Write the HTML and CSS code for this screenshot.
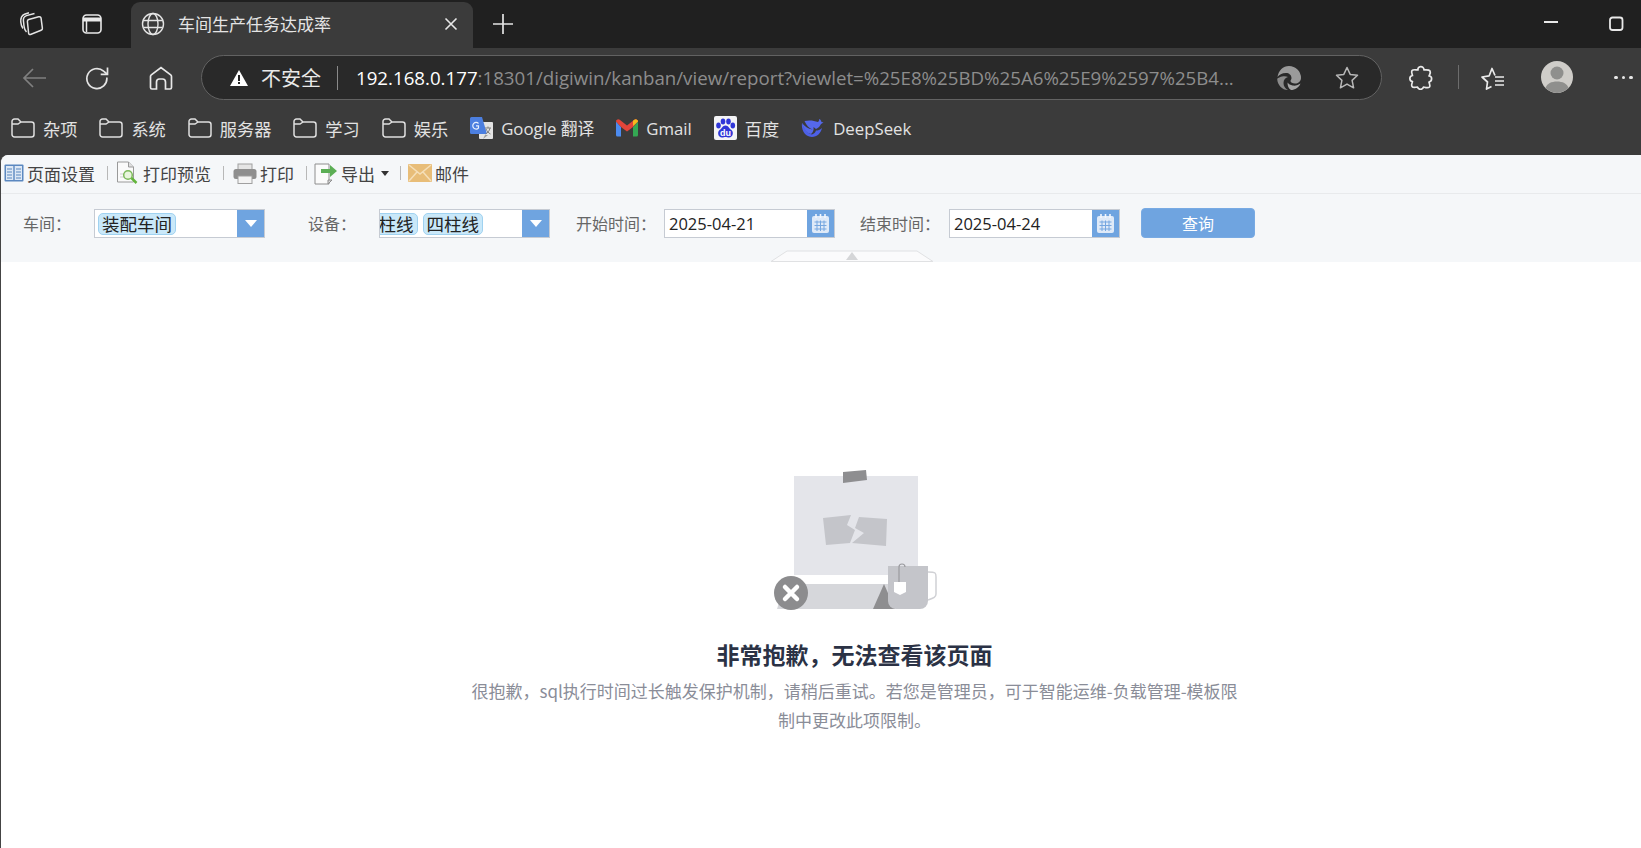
FILE: index.html
```html
<!DOCTYPE html>
<html lang="zh-CN">
<head>
<meta charset="utf-8">
<title>车间生产任务达成率</title>
<link rel="stylesheet" href="styles.css">
</head>
<body>
<div class="tabstrip">
  <div class="cell"><svg width="26" height="26" viewBox="0 0 26 26" fill="none" stroke="#e4e4e4" stroke-width="1.500"><path d="M11.500 23.500c-1 .3-1.800-.3-1.900-1.300L8.400 10.500c-.1-1 .4-1.700 1.300-2l10-2.700c1.200-.3 2.200.3 2.400 1.500l1.300 10c.1 1-.4 1.700-1.300 2z"/><path d="M7.500 21C5.800 19.500 5.300 17.500 5 15L4.400 9.500C4.100 6.800 5 5.500 7.500 4.600L15.500 2.500"/><path d="M4 17.500C2.500 15.500 2 13.500 1.800 11 1.500 7 2.500 4.500 5.500 3.200L10 1.800"/></svg></div>
  <div class="cell"><svg width="22" height="22" viewBox="0 0 22 22" fill="none" stroke="#e8e8e8" stroke-width="1.600"><rect x="2" y="2" width="18" height="18" rx="3.500"/><path d="M2 6.500h18" stroke-width="4"/><path d="M5.500 7v12" stroke-width="1.500"/></svg></div>
  <div class="tab">
    <svg width="24" height="24" viewBox="0 0 24 24" fill="none" stroke="#e4e4e4" stroke-width="1.400"><circle cx="12" cy="12" r="10.500"/><ellipse cx="12" cy="12" rx="5" ry="10.500"/><path d="M2.500 8.500h19M2.500 15.500h19"/></svg>
    <span class="tab-title">车间生产任务达成率</span>
    <svg class="tab-close" width="14" height="14" viewBox="0 0 14 14" stroke="#e8e8e8" stroke-width="1.600"><path d="M1.500 1.500l11 11M12.500 1.500l-11 11"/></svg>
  </div>
  <div class="cell new"><svg width="22" height="22" viewBox="0 0 22 22" stroke="#e4e4e4" stroke-width="1.700"><path d="M11 1v20M1 11h20"/></svg></div>
  <div class="winctl">
    <div class="wbtn"><svg width="16" height="16" viewBox="0 0 16 16" stroke="#e8e8e8" stroke-width="2"><path d="M1 6h14"/></svg></div>
    <div class="wbtn"><svg width="16" height="16" viewBox="0 0 16 16" fill="none" stroke="#e8e8e8" stroke-width="1.800"><rect x="2" y="1.500" width="12.500" height="12.500" rx="2.500"/></svg></div>
  </div>
</div>

<div class="navbar">
  <div class="nav"><svg width="26" height="24" viewBox="0 0 26 24" fill="none" stroke="#808080" stroke-width="1.700"><path d="M24 12H2M11 3l-9 9 9 9"/></svg></div>
  <div class="nav"><svg width="26" height="26" viewBox="0 0 26 26" fill="none" stroke="#e4e4e4" stroke-width="1.700"><path d="M21.800 12.500a10 10 0 1 1-3.200-6.300L22 9"/><path d="M22.500 2.500V9.300h-6.800"/></svg></div>
  <div class="nav"><svg width="24" height="26" viewBox="0 0 24 26" fill="none" stroke="#e8e8e8" stroke-width="1.700"><path d="M3 24a1.500 1.500 0 0 1-1.500-1.500V11.500a2 2 0 0 1 .8-1.600L12 2.500l9.700 7.400a2 2 0 0 1 .8 1.600v11A1.500 1.500 0 0 1 21 24h-4.500v-7a3 3 0 0 0-3-3h-3a3 3 0 0 0-3 3v7z"/></svg></div>
  <div class="omnibox">
    <svg class="warn" width="18" height="16" viewBox="0 0 18 16"><path d="M9 0l9 16H0z" fill="#fff"/><path d="M8 5h2v6H8zM8 12h2v2H8z" fill="#222"/></svg>
    <span class="insecure">不安全</span>
    <span class="divider"></span>
    <span class="url"><span class="host">192.168.0.177</span>:18301/digiwin/kanban/view/report?viewlet=%25E8%25BD%25A6%25E9%2597%25B4...</span>
    <svg class="edge" width="24" height="24" viewBox="0 0 24 24"><path d="M12 0a12 12 0 0 1 12 12c0 3.500-3 5.500-6 5.500-2.500 0-4.500-1-4.500-2.500 0-1 1-1.200 1-3 0-3-2.500-5-5.500-5C5 7 2 9 .5 11 1.500 4.500 6 0 12 0z" fill="#9a9a9a"/><path d="M.2 13C.5 19 5 24 11 24c-3-1.500-4.500-4-4.500-7 0-3.500 2-5.500 4.500-6-4-2-10 .5-10.800 2z" fill="#8a8a8a"/><path d="M14 24c4 0 8-2.500 9.500-6.500-2 1.500-5 2.500-8 2-2-.3-4-1.500-5-3 0 3.500 1 6 3.500 7.500z" fill="#a5a5a5"/></svg>
    <svg class="star" width="24" height="24" viewBox="0 0 24 24" fill="none" stroke="#b8b8b8" stroke-width="1.500" stroke-linejoin="round"><path d="M12 1.500l3.200 6.900 7.300.9-5.400 5.100 1.500 7.400-6.600-3.700-6.600 3.700 1.500-7.400L1.500 9.300l7.300-.9z"/></svg>
  </div>
  <div class="act puzzle"><svg width="24" height="26" viewBox="0 0 24 26" fill="none" stroke="#eaeaea" stroke-width="1.700" stroke-linejoin="round"><path d="M9 5c-1-4 6-5 6 0 2 0 5-.5 6 1 1 2-.5 3.500-1 5 3.500 0 3.500 5.500 0 6 .5 2 1.500 3.500.5 5-1.500 1.500-4 .5-6 0-1 3-5 3-6 0-2 .5-4.500 1-5.500-.5-1-1.500 0-3.500.5-5C0 16 0 11 3.500 10.500 3 9 2 7 3 5.500 4.500 4 7 5 9 5z"/></svg></div>
  <span class="vsep"></span>
  <div class="act fav"><svg width="26" height="24" viewBox="0 0 26 24" fill="none" stroke="#eaeaea" stroke-width="1.700" stroke-linejoin="round"><path d="M11.500 20.500l-5 2.500 1-7L2 11l7.200-1.200L12 2.500l3 7"/><path d="M15 11h9M15 15h9M15 19h9"/></svg></div>
  <div class="avatar"><svg width="32" height="32" viewBox="0 0 32 32"><circle cx="16" cy="16" r="16" fill="#cfcdc9"/><circle cx="16" cy="12" r="6.500" fill="#8f8f8d"/><path d="M4.500 27c1.500-4.500 6-6.500 11.500-6.500s10 2 11.500 6.500a16 16 0 0 1-23 0z" fill="#8f8f8d"/></svg></div>
  <div class="dots"><i></i><i></i><i></i></div>
</div>

<div class="bookmarks">
  <div class="bm"><svg class="folder" width="24" height="20" viewBox="0 0 24 20" fill="none" stroke="#e0e0e0" stroke-width="1.500"><path d="M1 3.500A2.500 2.500 0 0 1 3.500 1H7l3 3h10.500A2.500 2.500 0 0 1 23 6.500v10a2.500 2.500 0 0 1-2.500 2.500h-17A2.500 2.500 0 0 1 1 16.500z"/><path d="M1 6h6l3-2"/></svg><span>杂项</span></div>
  <div class="bm"><svg class="folder" width="24" height="20" viewBox="0 0 24 20" fill="none" stroke="#e0e0e0" stroke-width="1.500"><path d="M1 3.500A2.500 2.500 0 0 1 3.500 1H7l3 3h10.500A2.500 2.500 0 0 1 23 6.500v10a2.500 2.500 0 0 1-2.500 2.500h-17A2.500 2.500 0 0 1 1 16.500z"/><path d="M1 6h6l3-2"/></svg><span>系统</span></div>
  <div class="bm"><svg class="folder" width="24" height="20" viewBox="0 0 24 20" fill="none" stroke="#e0e0e0" stroke-width="1.500"><path d="M1 3.500A2.500 2.500 0 0 1 3.500 1H7l3 3h10.500A2.500 2.500 0 0 1 23 6.500v10a2.500 2.500 0 0 1-2.500 2.500h-17A2.500 2.500 0 0 1 1 16.500z"/><path d="M1 6h6l3-2"/></svg><span>服务器</span></div>
  <div class="bm"><svg class="folder" width="24" height="20" viewBox="0 0 24 20" fill="none" stroke="#e0e0e0" stroke-width="1.500"><path d="M1 3.500A2.500 2.500 0 0 1 3.500 1H7l3 3h10.500A2.500 2.500 0 0 1 23 6.500v10a2.500 2.500 0 0 1-2.500 2.500h-17A2.500 2.500 0 0 1 1 16.500z"/><path d="M1 6h6l3-2"/></svg><span>学习</span></div>
  <div class="bm"><svg class="folder" width="24" height="20" viewBox="0 0 24 20" fill="none" stroke="#e0e0e0" stroke-width="1.500"><path d="M1 3.500A2.500 2.500 0 0 1 3.500 1H7l3 3h10.500A2.500 2.500 0 0 1 23 6.500v10a2.500 2.500 0 0 1-2.500 2.500h-17A2.500 2.500 0 0 1 1 16.500z"/><path d="M1 6h6l3-2"/></svg><span>娱乐</span></div>
  <div class="bm"><svg width="23" height="24" viewBox="0 0 23 24"><rect x="9" y="6" width="14" height="17" rx="1" fill="#e4e4e4"/><path d="M15 19l-2 4 5-4z" fill="#9e9e9e"/><path d="M1.500 1H12l5 17H1.500A1.500 1.500 0 0 1 0 16.500v-14A1.500 1.500 0 0 1 1.500 1z" fill="#4c7fe0"/><path d="M11 7.500A3.300 3.300 0 1 0 11 12V9.800H8.500" fill="none" stroke="#e8f0ff" stroke-width="1.200" transform="translate(-2.500 0)"/><path d="M15 12h6M18 10.500v1.500M20 12c-.5 3-2.500 5-4.500 6M16 13c.8 2 2.500 4 4.500 5" fill="none" stroke="#808080" stroke-width="1"/></svg><span class="latin">Google 翻译</span></div>
  <div class="bm"><svg width="22" height="18" viewBox="0 0 22 18"><path d="M0 2.500V16a1.500 1.500 0 0 0 1.500 1.500H5V8z" fill="#4c8bf0"/><path d="M17 8v9.500h3.500A1.500 1.500 0 0 0 22 16V2.500z" fill="#34a853"/><path d="M0 2.500C0 .5 2.200-.5 3.700.700L11 6.500l7.300-5.800C19.800-.5 22 .5 22 2.500L17 8l-6 4.500L5 8z" fill="#e3453a"/><path d="M17 1.700l1.300-1C19.800-.5 22 .5 22 2.500L17 7z" fill="#f6bb1c"/></svg><span class="latin">Gmail</span></div>
  <div class="bm"><svg width="23" height="24" viewBox="0 0 23 24"><rect width="23" height="24" rx="2" fill="#f4f4f6"/><g fill="#2f36d8"><ellipse cx="4.500" cy="9.500" rx="2.300" ry="3"/><ellipse cx="9" cy="5.500" rx="2.300" ry="3"/><ellipse cx="14.500" cy="5.500" rx="2.300" ry="3"/><ellipse cx="18.800" cy="9.500" rx="2.300" ry="3"/><path d="M11.500 9.500c3 0 3.500 3 6 4.500 2.500 2 1.500 7.500-2.500 7.500-1.500 0-2.300-.5-3.500-.5s-2 .5-3.500.5c-4 0-5-5.500-2.500-7.500 2.500-1.500 3-4.500 6-4.500z"/></g><text x="11.500" y="20" class="du">du</text></svg><span>百度</span></div>
  <div class="bm"><svg width="24" height="20" viewBox="0 0 24 20"><path d="M1 5c1.500 6 4 10 9 11 2-1.500 3-4 2.500-7l2.500 2c2.500-1 4-3 5-5l2.500-1.500-2-.5C20 2 19 1 18 1c.5 1 0 2-1 3C13 2.500 8 2 3.500 3c2 4 4.500 7.500 8 8.500C7 11 3.500 8 1 5z" fill="#5568ea"/><path d="M1 5c-1 5 2 14 10 14 5 0 9-4 10-9-2 2-4 2.500-6 2.500-.5 2-2 3-4 4-5-1-8-6-10-11.500z" fill="#4d60e6"/></svg><span class="latin">DeepSeek</span></div>
</div>

<div class="page">
  <div class="rtoolbar">
    <div class="ritem"><svg width="20" height="18" viewBox="0 0 20 18"><rect x=".5" y=".5" width="19" height="17" rx="1" fill="#5b88c0"/><rect x="2" y="2" width="7.300" height="14" fill="#dde8f5"/><rect x="10.700" y="2" width="7.300" height="14" fill="#dde8f5"/><path d="M3 5h5M3 8h5M3 11h5M3 14h5M12 5h5M12 8h5M12 11h5M12 14h5" stroke="#5b88c0" stroke-width="1.200"/></svg><span>页面设置</span></div>
    <span class="rsep s1"></span>
    <div class="ritem"><svg width="24" height="24" viewBox="0 0 24 24"><path d="M1.500 1h11l5 5v15h-16z" fill="#fafafa" stroke="#9a9a9a"/><path d="M12.500 1v5h5" fill="#e0e0e0" stroke="#9a9a9a"/><path d="M4 13h6M4 16h5" stroke="#cfcfcf"/><circle cx="12" cy="14" r="4.300" fill="#e8f5dc" stroke="#7cb95a" stroke-width="1.500"/><path d="M15.500 17l5 5" stroke="#63b53c" stroke-width="2.500"/></svg><span>打印预览</span></div>
    <span class="rsep s2"></span>
    <div class="ritem"><svg width="24" height="21" viewBox="0 0 24 21"><rect x="5" y="1" width="14" height="6" fill="#e5e5e5" stroke="#a0a0a0"/><rect x=".5" y="6" width="23" height="10" rx="2.500" fill="#8f8f8f"/><rect x="5" y="13" width="14" height="7.500" fill="#f4f4f4" stroke="#a0a0a0"/></svg><span>打印</span></div>
    <span class="rsep s3"></span>
    <div class="ritem"><svg width="24" height="24" viewBox="0 0 24 24"><path d="M1 3h14v20H1z" fill="#fbfbfb" stroke="#8e8e8e" stroke-width="1"/><path d="M14 23l4-4h-4z" fill="#d8d8d8" stroke="#8e8e8e"/><path d="M7 8h9V4l7 6-7 6v-4H7z" fill="#5cae55"/></svg><span>导出</span><i class="caret"></i></div>
    <span class="rsep s4"></span>
    <div class="ritem"><svg width="24" height="18" viewBox="0 0 24 18"><rect width="24" height="18" rx="1" fill="#e8bd78"/><path d="M1 1l11 9 11-9M1 17l8-9M23 17l-8-9" fill="none" stroke="#f5dfb8" stroke-width="1.500"/></svg><span>邮件</span></div>
  </div>

  <div class="filters">
    <label class="flabel l1">车间：</label>
    <div class="combo c1"><div class="field"><span class="tag">装配车间</span></div><div class="arrow"><i></i></div></div>
    <label class="flabel l2">设备：</label>
    <div class="combo c2"><div class="field end"><span class="tag">三柱线</span><span class="tag">四柱线</span></div><div class="arrow"><i></i></div></div>
    <label class="flabel l3">开始时间：</label>
    <div class="combo c3"><div class="field date">2025-04-21</div><div class="cal"><svg width="19" height="21" viewBox="0 0 19 21"><rect x="1" y="3" width="17" height="17" rx="2" fill="#dfeaf8"/><path d="M5 1v4M9.500 1v4M14 1v4" stroke="#f3f7fd" stroke-width="1.600"/><path d="M3.500 9h12M3.500 12.500h12M3.500 16h12M6 7.500v10.500M9.500 7.500v10.500M13 7.500v10.500" stroke="#76a7e0" stroke-width="1"/></svg></div></div>
    <label class="flabel l4">结束时间：</label>
    <div class="combo c3"><div class="field date">2025-04-24</div><div class="cal"><svg width="19" height="21" viewBox="0 0 19 21"><rect x="1" y="3" width="17" height="17" rx="2" fill="#dfeaf8"/><path d="M5 1v4M9.500 1v4M14 1v4" stroke="#f3f7fd" stroke-width="1.600"/><path d="M3.500 9h12M3.500 12.500h12M3.500 16h12M6 7.500v10.500M9.500 7.500v10.500M13 7.500v10.500" stroke="#76a7e0" stroke-width="1"/></svg></div></div>
    <button class="query">查询</button>
    <svg class="collapse" width="164" height="12" viewBox="0 0 164 12"><path d="M1 11.500 17 1h130l16 10.500z" fill="#fbfbfc" stroke="#e0e1e3"/><path d="M82 2l6 8H76z" fill="#d5d6d8"/></svg>
  </div>

  <div class="notice">
    <svg class="art" width="164" height="140" viewBox="0 0 164 140">
      <rect x="21" y="6" width="124" height="99" fill="#e4e5ea"/>
      <path d="M70 2 93 0l1 10-24 3z" fill="#8e8e90"/>
      <path d="M50 48l28-3-4 10 8 5-5 13-24 2z" fill="#c4c5ca"/>
      <path d="M86 47l28 2-1 27-34-3 12-10-9-5z" fill="#c4c5ca"/>
      <path d="M4 139 12 114h108v25z" fill="#d6d7db"/>
      <circle cx="18" cy="123" r="17" fill="#8c8c8e"/>
      <path d="M12 117l12 12M24 117l-12 12" stroke="#fff" stroke-width="4.500" stroke-linecap="round"/>
      <path d="M111 114l11 25h-22z" fill="#8e8e90"/>
      <path d="M155 102c8 0 8 1 8 5v17c0 3-2 4-8 6" fill="none" stroke="#d0d1d5" stroke-width="1.500"/>
      <path d="M115 96h40v35a8 8 0 0 1-8 8h-24a8 8 0 0 1-8-8z" fill="#c4c5ca"/>
      <path d="M126 112v-15a3 3 0 0 1 6 0" fill="none" stroke="#9a9a9e" stroke-width="1.200"/>
      <path d="M121 112h12v10l-6 3-6-3z" fill="#fff"/>
    </svg>
    <h1 class="n-title">非常抱歉，无法查看该页面</h1>
    <p class="n-text">很抱歉，sql执行时间过长触发保护机制，请稍后重试。若您是管理员，可于智能运维-负载管理-模板限制中更改此项限制。</p>
  </div>
</div>
</body>
</html>
```
FILE: styles.css
```css
* { box-sizing: border-box; }
html, body { margin: 0; height: 100%; }
body {
  width: 1641px;
  height: 848px;
  overflow: hidden;
  display: flex;
  flex-direction: column;
  background: #3b3b3b;
  font-family: "Open Sans", "Noto Sans CJK SC", sans-serif;
}
svg { display: block; flex: none; }

.tabstrip {
  height: 48px;
  flex: none;
  display: flex;
  align-items: flex-end;
  padding-left: 2px;
  background: #202020;
}
.cell {
  width: 60px;
  height: 48px;
  display: flex;
  align-items: center;
  justify-content: center;
}
.tab {
  width: 342px;
  height: 46px;
  margin-left: 9px;
  padding: 0 15px 3px 10px;
  display: flex;
  align-items: center;
  background: #3b3b3b;
  border-radius: 9px 9px 0 0;
  color: #e4e4e4;
  font-size: 17px;
}
.tab-title { margin-left: 13px; flex: 1; font-family: "Noto Sans CJK SC", sans-serif; }
.winctl { margin-left: auto; height: 48px; display: flex; gap: 15px; }
.wbtn {
  width: 50px;
  display: flex;
  align-items: center;
  justify-content: center;
}

.navbar {
  height: 52px;
  flex: none;
  padding: 7px 0 0 3px;
  display: flex;
  align-items: flex-start;
  background: #3b3b3b;
}
.nav {
  flex: none;
  width: 63px;
  height: 45px;
  display: flex;
  align-items: center;
  justify-content: center;
}
.omnibox {
  flex: none;
  width: 1181px;
  height: 45px;
  margin-left: 9px;
  padding: 0 23px 0 28px;
  display: flex;
  align-items: center;
  background: #292929;
  border: 1.500px solid #626262;
  border-radius: 23px;
}
.warn { margin-right: 13px; }
.insecure {
  flex: none;
  color: #e8e8e8;
  font-size: 20px;
  white-space: nowrap;
  font-family: "Noto Sans CJK SC", sans-serif;
}
.divider { flex: none; width: 1px; height: 24px; margin: 0 18px 0 16px; background: #8a8a8a; }
.url { flex: none; color: #8d8d8d; font-size: 18.700px; width: 889px; white-space: nowrap; overflow: hidden; }
.host { color: #fff; }
.edge { margin-left: 32px; }
.star { margin-left: 34px; }
.act {
  flex: none;
  height: 45px;
  display: flex;
  align-items: center;
}
.puzzle { margin-left: 27px; }
.vsep { flex: none; width: 1px; height: 24px; margin: 10px 0 0 25px; background: #6d6d6d; }
.fav { margin-left: 21px; }
.avatar { flex: none; margin-left: 35px; margin-top: 6px; }
.dots { flex: none; margin-left: 41px; height: 45px; display: flex; align-items: center; gap: 4px; }
.dots i { width: 3.500px; height: 3.500px; border-radius: 50%; background: #e8e8e8; }

.bookmarks {
  height: 55px;
  flex: none;
  padding: 1px 0 0 11px;
  display: flex;
  align-items: center;
  gap: 22px;
  background: #3b3b3b;
  color: #e2e2e2;
  font-size: 17.200px;
}
.bm { display: flex; align-items: center; gap: 8px; white-space: nowrap; }
.latin { font-size: 16.800px; }
.du { font: 700 9px "Liberation Sans", sans-serif; fill: #fff; text-anchor: middle; }

.page {
  flex: 1;
  display: flex;
  flex-direction: column;
  background: #fff;
  border-left: 1px solid #444;
  border-radius: 8px 0 0 0;
  overflow: hidden;
  font-family: "Noto Sans CJK SC", sans-serif;
}
.rtoolbar {
  height: 39px;
  flex: none;
  padding: 0 0 2px 3px;
  display: flex;
  align-items: center;
  background: #f5f7f9;
  border-bottom: 1px solid #e8eaec;
  color: #444;
  font-size: 17px;
}
.ritem { display: flex; align-items: center; gap: 3px; }
.rsep { width: 1px; height: 14px; background: #b8b8b8; }
.s1 { margin: 0 8px 0 12px; }
.s2 { margin: 0 9px 0 12px; }
.s3 { margin: 0 7px 0 12px; }
.s4 { margin: 0 7px 0 11px; }
.caret {
  width: 0;
  height: 0;
  margin-left: 3px;
  border: 4px solid transparent;
  border-top: 5px solid #333;
  border-bottom: 0;
}

.filters {
  position: relative;
  height: 68px;
  flex: none;
  padding: 15px 0 0 22px;
  display: flex;
  align-items: flex-start;
  background: #f5f7f9;
  color: #666;
  font-size: 16px;
}
.flabel { line-height: 29px; white-space: nowrap; }
.l1 { width: 71px; }
.l2 { width: 71px; margin-left: 43px; }
.l3 { width: 88px; margin-left: 26px; }
.l4 { width: 89px; margin-left: 25px; }
.combo {
  flex: none;
  height: 29px;
  display: flex;
  background: #fff;
  border: 1px solid #c6cbd3;
  color: #222;
}
.c1 { width: 171px; }
.c2 { width: 171px; }
.c3 { width: 171px; }
.field {
  flex: 1;
  min-width: 0;
  display: flex;
  align-items: center;
  gap: 5px;
  padding: 0 3px;
  overflow: hidden;
}
.field.end { justify-content: flex-end; padding: 0 39px 0 0; }
.field.date { padding: 0 4px; font-size: 16.500px; font-family: "Open Sans", sans-serif; }
.tag {
  flex: none;
  height: 22px;
  padding: 0 3px;
  line-height: 20px;
  font-size: 17.500px;
  background: #c9e8f9;
  border: 1px solid #a0d2f0;
  border-radius: 5px;
}
.arrow, .cal {
  flex: none;
  width: 27px;
  display: flex;
  align-items: center;
  justify-content: center;
  background: #6fa4e0;
}
.arrow i {
  width: 0;
  height: 0;
  border: 6.500px solid transparent;
  border-top: 7px solid #fff;
  border-bottom: 0;
}
.query {
  width: 114px;
  height: 30px;
  margin: -1px 0 0 21px;
  padding: 0;
  background: #6fa4e0;
  color: #fff;
  border: 1px solid #78aae3;
  border-radius: 4px;
  font: 16px "Noto Sans CJK SC", sans-serif;
}
.collapse { position: absolute; left: 769px; bottom: 0; }

.notice {
  flex: 1;
  padding: 208px 0 0 67px;
  display: flex;
  flex-direction: column;
  align-items: center;
}
.n-title {
  margin: 28px 0 0;
  color: #2b3245;
  font-size: 23px;
  line-height: 32px;
  font-weight: 700;
}
.n-text {
  width: 775px;
  margin: 6px 0 0;
  color: #8a8d98;
  font-size: 17px;
  line-height: 29px;
  text-align: center;
}
```
